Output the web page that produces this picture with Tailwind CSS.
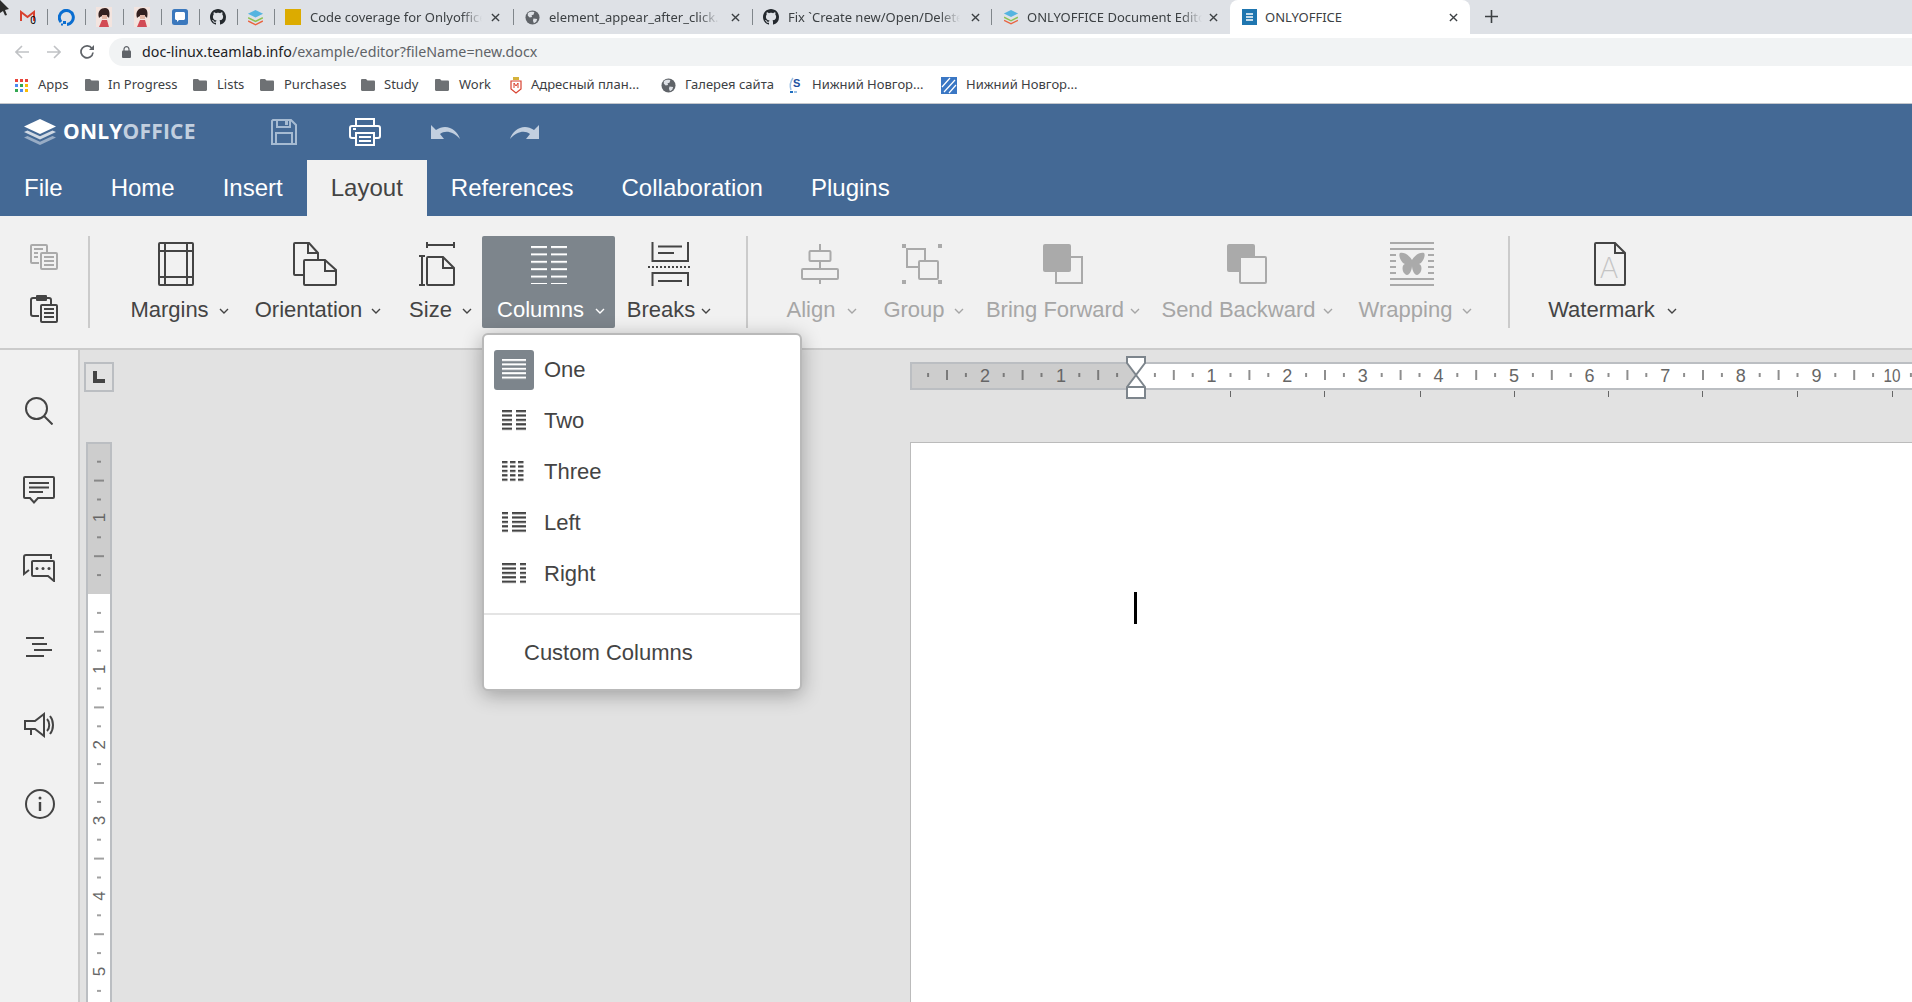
<!DOCTYPE html>
<html>
<head>
<meta charset="utf-8">
<script src="https://cdn.jsdelivr.net/npm/@tailwindcss/browser@4"></script>
<title>ONLYOFFICE</title>
</head>
<body class="w-[1912px] h-[1002px] overflow-hidden relative bg-white font-['Liberation_Sans',Arial,sans-serif] text-[#444444]">
<svg class="absolute w-0 h-0" aria-hidden="true">
  <defs>
    <pattern id="ml" patternUnits="userSpaceOnUse" width="60" height="4.4"><rect width="60" height="2.2" fill="#444444"/></pattern>
    <pattern id="mw" patternUnits="userSpaceOnUse" width="60" height="4.4"><rect width="60" height="2" fill="#ffffff"/></pattern>
    <pattern id="cw" patternUnits="userSpaceOnUse" width="60" height="7.4"><rect width="60" height="2" fill="#ffffff"/></pattern>
    <symbol id="stack" viewBox="0 0 18 18"><path d="M9 1 17 5 9 9 1 5Z" fill="#55b4e0"/><path d="M1.5 8.5 9 12.3 16.5 8.5 17 10 9 14 1 10Z" fill="#8cc152"/><path d="M1.5 12 9 15.8 16.5 12 17 13.5 9 17.5 1 13.5Z" fill="#e9633f"/></symbol>
    <symbol id="gh" viewBox="0 0 16 16"><path fill="#24292e" d="M8 0C3.58 0 0 3.58 0 8c0 3.54 2.29 6.53 5.47 7.59.4.07.55-.17.55-.38 0-.19-.01-.82-.01-1.49-2.01.37-2.53-.49-2.69-.94-.09-.23-.48-.94-.82-1.13-.28-.15-.68-.52-.01-.53.63-.01 1.08.58 1.23.82.72 1.21 1.87.87 2.33.66.07-.52.28-.87.51-1.07-1.78-.2-3.64-.89-3.64-3.95 0-.87.31-1.59.82-2.15-.08-.2-.36-1.02.08-2.12 0 0 .67-.21 2.2.82.64-.18 1.32-.27 2-.27.68 0 1.36.09 2 .27 1.53-1.04 2.2-.82 2.2-.82.44 1.1.16 1.92.08 2.12.51.56.82 1.27.82 2.15 0 3.07-1.87 3.75-3.65 3.95.29.25.54.73.54 1.48 0 1.07-.01 1.93-.01 2.2 0 .21.15.46.55.38A8.013 8.013 0 0016 8c0-4.42-3.58-8-8-8z"/></symbol>
    <symbol id="globe" viewBox="0 0 16 16"><circle cx="8" cy="8" r="7.5" fill="#5f6368"/><path d="M3 3.5C5 2 8 1.5 10 2.5L9 5 7 5.5 7.5 7.5 5 8 3 6ZM9 9 13 9.5 12 12.5 9.5 14 8.5 11.5Z" fill="#dee1e6"/></symbol>
    <symbol id="folder" viewBox="0 0 14 12"><path d="M0 1.2C0 .5.5 0 1.2 0H5L6.5 1.6H12.8C13.5 1.6 14 2.1 14 2.8V10.8C14 11.5 13.5 12 12.8 12H1.2C.5 12 0 11.5 0 10.8Z" fill="#6e7174"/></symbol>
    <symbol id="x" viewBox="0 0 10 10"><path d="M1 1 9 9M9 1 1 9" stroke="#3c4043" stroke-width="1.5" fill="none"/></symbol>
    <symbol id="chev" viewBox="0 0 10 6"><path d="M1 1 5 5 9 1" fill="none" stroke="currentColor" stroke-width="1.4"/></symbol>
    <symbol id="portrait" viewBox="0 0 16 20"><rect width="16" height="20" fill="#f3e4df"/><path d="M3 11C1 4 5 1 9 1 14 1 14 7 13 11 11 8 6 8 3 11Z" fill="#33201f"/><path d="M6 8H11V12H6Z" fill="#e4b7a6"/><path d="M3 20 6 13H11L13 20Z" fill="#d24a54"/></symbol>
  </defs>
</svg>

<!-- mouse pointer -->
<svg class="absolute left-0 top-0 z-30" width="10" height="16" viewBox="0 0 10 16"><path d="M0 0 9 9 5 10 7 15 5 15.5 3 11 0 13Z" fill="#2b2b2b"/></svg>

<!-- browser tab strip -->
<div class="flex h-[34px] bg-[#dee1e6] font-['Noto_Sans',sans-serif] text-[13px] leading-[18px] text-[#3c4043]">
  <div class="w-[47px] h-full flex items-center justify-end pr-[12px]">
    <div class="relative w-[15px] h-[14px]">
      <svg width="15" height="12" viewBox="0 0 15 12"><path d="M1 11V2L7.5 7 14 2V11" fill="none" stroke="#d8412f" stroke-width="2"/></svg>
      <span class="absolute right-[-1px] top-[5px] text-[10px] leading-[10px] text-black">0</span>
    </div>
  </div>
  <div class="w-[38px] flex items-center justify-center relative before:absolute before:left-0 before:top-[9px] before:h-[16px] before:w-px before:bg-[#80868b]">
    <svg width="17" height="17" viewBox="0 0 17 17"><path d="M3 13A7 7 0 1 1 9 15.4" fill="none" stroke="#0a6ed1" stroke-width="3"/><rect x="5" y="12" width="3" height="3" fill="#0a6ed1"/><rect x="3" y="14.5" width="2" height="2" fill="#0a6ed1"/></svg>
  </div>
  <div class="w-[38px] flex items-center justify-center relative before:absolute before:left-0 before:top-[9px] before:h-[16px] before:w-px before:bg-[#80868b]"><svg width="16" height="20"><use href="#portrait"/></svg></div>
  <div class="w-[38px] flex items-center justify-center relative before:absolute before:left-0 before:top-[9px] before:h-[16px] before:w-px before:bg-[#80868b]"><svg width="16" height="20"><use href="#portrait"/></svg></div>
  <div class="w-[38px] flex items-center justify-center relative before:absolute before:left-0 before:top-[9px] before:h-[16px] before:w-px before:bg-[#80868b]">
    <svg width="16" height="16" viewBox="0 0 16 16"><rect width="16" height="16" rx="2.5" fill="#3b78bd"/><path d="M3 4.5C3 3.7 3.7 3 4.5 3H11.5C12.3 3 13 3.7 13 4.5V9.5C13 10.3 12.3 11 11.5 11H7L5 13V11H4.5C3.7 11 3 10.3 3 9.5Z" fill="#ffffff"/></svg>
  </div>
  <div class="w-[38px] flex items-center justify-center relative before:absolute before:left-0 before:top-[9px] before:h-[16px] before:w-px before:bg-[#80868b]"><svg width="16" height="16"><use href="#gh"/></svg></div>
  <div class="w-[37px] flex items-center justify-center relative before:absolute before:left-0 before:top-[9px] before:h-[16px] before:w-px before:bg-[#80868b]"><svg width="17" height="17"><use href="#stack"/></svg></div>

  <div class="w-[239px] flex items-center pl-[11px] relative before:absolute before:left-0 before:top-[9px] before:h-[16px] before:w-px before:bg-[#80868b]">
    <span class="w-[16px] h-[16px] bg-[#dcab00] shrink-0"></span>
    <span class="ml-[9px] w-[172px] overflow-hidden whitespace-nowrap [mask-image:linear-gradient(90deg,#000_88%,transparent)]">Code coverage for Onlyoffice</span>
    <svg class="ml-[9px]" width="9" height="9"><use href="#x"/></svg>
  </div>
  <div class="w-[239px] flex items-center pl-[12px] relative before:absolute before:left-0 before:top-[9px] before:h-[16px] before:w-px before:bg-[#80868b]">
    <svg width="15" height="15" class="shrink-0"><use href="#globe"/></svg>
    <span class="ml-[9px] w-[170px] overflow-hidden whitespace-nowrap [mask-image:linear-gradient(90deg,#000_88%,transparent)]">element_appear_after_click.htm</span>
    <svg class="ml-[12px]" width="9" height="9"><use href="#x"/></svg>
  </div>
  <div class="w-[239px] flex items-center pl-[11px] relative before:absolute before:left-0 before:top-[9px] before:h-[16px] before:w-px before:bg-[#80868b]">
    <svg width="16" height="16" class="shrink-0"><use href="#gh"/></svg>
    <span class="ml-[9px] w-[172px] overflow-hidden whitespace-nowrap [mask-image:linear-gradient(90deg,#000_88%,transparent)]">Fix `Create new/Open/Delete</span>
    <svg class="ml-[11px]" width="9" height="9"><use href="#x"/></svg>
  </div>
  <div class="w-[239px] flex items-center pl-[12px] relative before:absolute before:left-0 before:top-[9px] before:h-[16px] before:w-px before:bg-[#80868b]">
    <svg width="16" height="16" class="shrink-0"><use href="#stack"/></svg>
    <span class="ml-[8px] w-[175px] overflow-hidden whitespace-nowrap [mask-image:linear-gradient(90deg,#000_88%,transparent)]">ONLYOFFICE Document Editor</span>
    <svg class="ml-[7px]" width="9" height="9"><use href="#x"/></svg>
  </div>
  <div class="w-[240px] h-full flex items-center pl-[12px] bg-white rounded-t-[8px]">
    <svg width="15" height="16" viewBox="0 0 15 16" class="shrink-0"><rect width="15" height="16" fill="#1f76b0"/><path d="M4 5H11M4 8H11M4 11H11" stroke="#ffffff" stroke-width="1.3"/></svg>
    <span class="ml-[8px] w-[180px] whitespace-nowrap">ONLYOFFICE</span>
    <svg class="ml-[4px]" width="9" height="9"><use href="#x"/></svg>
  </div>
  <svg class="ml-[15px] mt-[10px]" width="13" height="13" viewBox="0 0 13 13"><path d="M6.5 0V13M0 6.5H13" stroke="#3c4043" stroke-width="1.6"/></svg>
</div>

<!-- address bar -->
<div class="flex items-center h-[33px] pt-[4px] pb-[1px] bg-white font-['Noto_Sans',sans-serif]">
  <svg class="ml-[15px]" width="14" height="14" viewBox="0 0 14 14"><path d="M7 1 1 7 7 13M1 7H14" fill="none" stroke="#c0c2c5" stroke-width="1.6"/></svg>
  <svg class="ml-[18px]" width="14" height="14" viewBox="0 0 14 14"><path d="M7 1 13 7 7 13M13 7H0" fill="none" stroke="#c0c2c5" stroke-width="1.6"/></svg>
  <svg class="ml-[19px]" width="14" height="14" viewBox="0 0 14 14"><path d="M12 3.5A6 6 0 1 0 13 7.5" fill="none" stroke="#5f6368" stroke-width="1.7"/><path d="M9 5H14V0Z" fill="#5f6368"/></svg>
  <div class="ml-[15px] flex-1 h-[28px] rounded-l-full bg-[#f1f3f4] flex items-center pl-[13px] text-[14.25px] whitespace-nowrap">
    <svg width="9" height="12" viewBox="0 0 9 12"><path d="M2 5V3.2A2.5 2.5 0 0 1 7 3.2V5" fill="none" stroke="#5f6368" stroke-width="1.2"/><rect y="4.5" width="9" height="7.5" rx="1" fill="#5f6368"/></svg>
    <span class="ml-[11px] text-[#202124]">doc-linux.teamlab.info<span class="text-[#5f6368]">/example/editor?fileName=new.docx</span></span>
  </div>
</div>

<!-- bookmarks -->
<div class="flex items-center h-[37px] border-b border-[#c4c7cc] bg-white font-['Noto_Sans',sans-serif] text-[13px] text-[#3c4043] whitespace-nowrap">
  <svg class="ml-[15px]" width="13" height="13" viewBox="0 0 13 13">
    <rect width="3" height="3" fill="#e8453c"/><rect x="5" width="3" height="3" fill="#e8453c"/><rect x="10" width="3" height="3" fill="#e8453c"/>
    <rect y="5" width="3" height="3" fill="#4a8af4"/><rect x="5" y="5" width="3" height="3" fill="#34a853"/><rect x="10" y="5" width="3" height="3" fill="#fbbc05"/>
    <rect y="10" width="3" height="3" fill="#34a853"/><rect x="5" y="10" width="3" height="3" fill="#4a8af4"/><rect x="10" y="10" width="3" height="3" fill="#fbbc05"/>
  </svg>
  <span class="ml-[10px] w-[47px]">Apps</span>
  <svg width="14" height="12"><use href="#folder"/></svg>
  <span class="ml-[9px] w-[85px]">In Progress</span>
  <svg width="14" height="12"><use href="#folder"/></svg>
  <span class="ml-[10px] w-[43px]">Lists</span>
  <svg width="14" height="12"><use href="#folder"/></svg>
  <span class="ml-[10px] w-[77px]">Purchases</span>
  <svg width="14" height="12"><use href="#folder"/></svg>
  <span class="ml-[9px] w-[51px]">Study</span>
  <svg width="14" height="12"><use href="#folder"/></svg>
  <span class="ml-[10px] w-[50px]">Work</span>
  <svg width="14" height="17" viewBox="0 0 14 17"><rect x="4" y="0" width="6" height="3" fill="#d5b23b"/><path d="M2 4H12V12L7 16 2 12Z" fill="#fff" stroke="#d8412f" stroke-width="1.2"/><path d="M5 11V6L7 9 9 6V11" stroke="#d8412f" fill="none"/></svg>
  <span class="ml-[8px] w-[130px]">Адресный план...</span>
  <svg width="15" height="15"><use href="#globe"/></svg>
  <span class="ml-[9px] w-[103px]">Галерея сайта</span>
  <svg width="15" height="17" viewBox="0 0 15 17"><path d="M5 1C2 5 2 10 3 13" stroke="#9ec2e6" stroke-width="1.5" fill="none"/><text x="5" y="10" font-size="11" font-weight="700" fill="#1b4fa0" font-family="Liberation Sans">S</text><rect x="2" y="14" width="3" height="2" fill="#1f6fc0"/><rect x="6" y="14" width="3" height="2" fill="#9ec2e6"/></svg>
  <span class="ml-[9px] w-[129px]">Нижний Новгор...</span>
  <svg width="16" height="17" viewBox="0 0 16 17"><rect width="16" height="17" fill="#3a77c4"/><path d="M1 10 9 1M3 15 14 3M8 16 15 8" stroke="#ffffff" stroke-width="1.2"/></svg>
  <span class="ml-[9px]">Нижний Новгор...</span>
</div>

<!-- title row -->
<div class="h-[56px] bg-[#446995] flex items-center">
  <svg class="ml-[24px]" width="32" height="26" viewBox="0 0 32 26">
    <path d="M16 0 32 7.5 16 15 0 7.5Z" fill="#ffffff"/>
    <path d="M0 13 3.5 11.4 16 17.2 28.5 11.4 32 13 16 20.5Z" fill="#ffffff" fill-opacity=".75"/>
    <path d="M0 18.5 3.5 16.9 16 22.7 28.5 16.9 32 18.5 16 26Z" fill="#ffffff" fill-opacity=".45"/>
  </svg>
  <span class="ml-[7px] w-[133px] text-[21px] font-bold font-['Open_Sans',sans-serif] tracking-[0.2px] whitespace-nowrap text-white">ONLY<span class="text-[#c2cfdf]">OFFICE</span></span>
  <svg class="ml-[75px]" width="26" height="26" viewBox="0 0 26 26" fill="none" stroke="#a6bbd2" stroke-width="2"><path d="M2 1H20L25 6V25H1V2Z"/><path d="M6 1V8H19V1"/><path d="M5 25V14H21V25"/><rect x="14" y="2" width="3" height="4" fill="#a6bbd2" stroke="none"/></svg>
  <svg class="ml-[52px]" width="32" height="28" viewBox="0 0 32 28" fill="none" stroke="#ffffff" stroke-width="2"><path d="M7 8V1H25V8"/><path d="M7 20H3C2 20 1 19 1 18V10C1 9 2 8 3 8H29C30 8 31 9 31 10V18C31 19 30 20 29 20H25"/><rect x="7" y="15" width="18" height="12"/><path d="M10 19H22M10 23H22"/><path d="M4 11H7"/></svg>
  <svg class="ml-[50px]" width="29" height="16" viewBox="0 0 29 16"><path d="M0 1V15H13L9 10C14 6 22 7 29 15 26 5 15-1 5 6Z" fill="#c2cfdf"/></svg>
  <svg class="ml-[50px]" width="29" height="16" viewBox="0 0 29 16"><path d="M29 1V15H16L20 10C15 6 7 7 0 15 3 5 14-1 24 6Z" fill="#c2cfdf"/></svg>
</div>

<!-- tabs row -->
<div class="h-[56px] bg-[#446995] flex items-stretch text-[24px] text-white">
  <div class="px-6 flex items-center">File</div>
  <div class="px-6 flex items-center">Home</div>
  <div class="px-6 flex items-center">Insert</div>
  <div class="px-6 flex items-center bg-[#f1f1f1] text-[#444444]">Layout</div>
  <div class="px-6 flex items-center">References</div>
  <div class="px-6 flex items-center">Collaboration</div>
  <div class="px-6 flex items-center">Plugins</div>
</div>

<!-- toolbar -->
<div class="h-[134px] bg-[#f1f1f1] border-b-2 border-[#cbcbcb] pt-[20px] flex items-start text-[22px] text-[#444444]">
  <div class="w-[88px] h-[92px] flex flex-col items-center pl-[0px]">
    <svg class="mt-[8px]" width="28" height="26" viewBox="0 0 28 26" fill="none" stroke="#aaaaaa" stroke-width="2"><path d="M9 19H2C1.400 19 1 18.600 1 18V2C1 1.400 1.400 1 2 1H16C16.600 1 17 1.400 17 2V8"/><rect x="11" y="9" width="16" height="16" rx="1"/><path d="M14 13H24M14 17H24M14 21H24"/><path d="M4 5H13M4 9H8M4 13H8"/></svg>
    <svg class="mt-[25px]" width="28" height="28" viewBox="0 0 28 28" fill="none" stroke="#444444" stroke-width="2"><path d="M9 21H3C2 21 1 20 1 19V5C1 4 2 3 3 3H6M17 3H19C20 3 21 4 21 5V9"/><rect x="6" y="0" width="11" height="6" rx="1" fill="#444444" stroke="none"/><rect x="11" y="10" width="16" height="17" rx="1"/><path d="M14 14H24M14 18H24M14 22H24"/></svg>
  </div>
  <div class="w-[2px] h-[92px] bg-[#cbcbcb] shrink-0"></div>

  <div class="ml-[26px] w-[120px] h-[92px] flex flex-col items-center">
    <svg class="mt-[6px]" width="36" height="44" viewBox="0 0 36 44" fill="none" stroke="#444444" stroke-width="2"><rect x="1" y="1" width="34" height="42" rx="1"/><path d="M7 1V43M29 1V43M1 9H35M1 35H35"/></svg>
    <span class="mt-[11px] pl-[7px] flex items-center leading-[26px]">Margins<svg class="ml-[10px] mt-[1px]" width="10" height="6"><use href="#chev"/></svg></span>
  </div>
  <div class="w-[158px] h-[92px] flex flex-col items-center">
    <svg class="mt-[6px]" width="44" height="44" viewBox="0 0 44 44" fill="none" stroke="#444444" stroke-width="2"><path d="M10 33H2C1.400 33 1 32.600 1 32V2C1 1.400 1.400 1 2 1H16L25 11V17"/><path d="M15 1V11H25"/><path d="M12 18H32L43 28V42C43 42.600 42.600 43 42 43H12C11.400 43 11 42.600 11 42V19C11 18.400 11.400 18 12 18Z"/><path d="M32 18V29H43"/></svg>
    <span class="mt-[11px] pl-[6px] flex items-center leading-[26px]">Orientation<svg class="ml-[9px] mt-[1px]" width="10" height="6"><use href="#chev"/></svg></span>
  </div>
  <div class="w-[88px] h-[92px] flex flex-col items-center">
    <svg class="mt-[6px] mr-[2px]" width="36" height="44" viewBox="0 0 36 44" fill="none" stroke="#444444" stroke-width="2"><path d="M8 3H35M8 0V6M35 0V6"/><path d="M3 14V43M0 14H6M0 43H6"/><path d="M9 15H24L35 26V42C35 42.600 34.600 43 34 43H9C8.400 43 8 42.600 8 42V16C8 15.400 8.400 15 9 15Z"/><path d="M24 15V26H35"/></svg>
    <span class="mt-[11px] pl-[5px] flex items-center leading-[26px]">Size<svg class="ml-[10px] mt-[1px]" width="10" height="6"><use href="#chev"/></svg></span>
  </div>
  <div class="w-[133px] h-[92px] flex flex-col items-center rounded-[2px] bg-[#7d858c] text-white">
    <svg class="mt-[10px]" width="36" height="38" viewBox="0 0 36 38"><rect x="0" width="16" height="38" fill="url(#cw)"/><rect x="20" width="16" height="38" fill="url(#cw)"/></svg>
    <span class="mt-[13px] pl-[5px] flex items-center leading-[26px]">Columns<svg class="ml-[11px] mt-[1px]" width="10" height="6"><use href="#chev"/></svg></span>
  </div>
  <div class="w-[108px] h-[92px] flex flex-col items-center">
    <svg class="mt-[6px]" width="42" height="44" viewBox="0 0 42 44" fill="none" stroke="#444444" stroke-width="2"><path d="M4.500 0V19H40V0M10 4.500H34M10 11H26"/><path d="M0 25H42" stroke-dasharray="2 2"/><path d="M4.500 44V31H40V44M10 39H34"/></svg>
    <span class="mt-[11px] flex items-center leading-[26px]">Breaks<svg class="ml-[6px] mt-[1px]" width="10" height="6"><use href="#chev"/></svg></span>
  </div>
  <div class="ml-[23px] w-[2px] h-[92px] bg-[#cbcbcb] shrink-0"></div>

  <div class="ml-[23px] w-[102px] h-[92px] flex flex-col items-center text-[#a6a6a6]">
    <svg class="mt-[8px] mr-[5px]" width="38" height="40" viewBox="0 0 38 40" fill="none" stroke="#aaaaaa" stroke-width="2"><path d="M19 0V7M19 17V25M19 35V40"/><rect x="8.500" y="7" width="21" height="10" rx="1"/><rect x="1" y="25" width="36" height="10" rx="1"/></svg>
    <span class="mt-[13px] flex items-center leading-[26px]">Align<svg class="ml-[12px] mt-[1px]" width="10" height="6"><use href="#chev"/></svg></span>
  </div>
  <div class="w-[98px] h-[92px] flex flex-col items-center text-[#a6a6a6]">
    <svg class="mt-[8px]" width="40" height="40" viewBox="0 0 40 40" fill="none" stroke="#aaaaaa" stroke-width="2"><path d="M0 2H4M36 2H40M0 38H4M36 38H40" stroke-width="4"/><path d="M17 23H5V5H23V17"/><rect x="17" y="17" width="19" height="18" rx="1"/></svg>
    <span class="mt-[13px] pl-[3px] flex items-center leading-[26px]">Group<svg class="ml-[9px] mt-[1px]" width="10" height="6"><use href="#chev"/></svg></span>
  </div>
  <div class="w-[184px] h-[92px] flex flex-col items-center text-[#a6a6a6]">
    <svg class="mt-[8px]" width="40" height="40" viewBox="0 0 40 40" fill="none" stroke="#aaaaaa" stroke-width="2"><rect width="28" height="28" rx="2" fill="#aaaaaa" stroke="none"/><path d="M28 13H39V39H13V28"/></svg>
    <span class="mt-[13px] flex items-center leading-[26px]">Bring Forward<svg class="ml-[6px] mt-[1px]" width="10" height="6"><use href="#chev"/></svg></span>
  </div>
  <div class="w-[184px] h-[92px] flex flex-col items-center text-[#a6a6a6]">
    <svg class="mt-[8px]" width="40" height="40" viewBox="0 0 40 40" fill="none" stroke="#aaaaaa" stroke-width="2"><rect width="28" height="28" rx="2" fill="#aaaaaa" stroke="none"/><rect x="13" y="13" width="26" height="26" rx="1" fill="#f1f1f1"/></svg>
    <span class="mt-[13px] flex items-center leading-[26px]">Send Backward<svg class="ml-[7px] mt-[1px]" width="10" height="6"><use href="#chev"/></svg></span>
  </div>
  <div class="w-[148px] h-[92px] flex flex-col items-center text-[#a6a6a6]">
    <svg class="mt-[6px] mr-[2px]" width="44" height="44" viewBox="0 0 44 44" fill="none" stroke="#aaaaaa" stroke-width="2"><path d="M0 1H44M0 7H44M0 37H44M0 43H44"/><path d="M0 13H6M38 13H44M0 19H6M38 19H44M0 25H6M38 25H44M0 31H6M38 31H44"/><path d="M22 18C19 13 14 10 10 11 8 13 11 21 15 22 11 23 12 32 17 33 20 33 22 27 22 24 22 27 24 33 27 33 32 32 33 23 29 22 33 21 36 13 34 11 30 10 25 13 22 18Z" fill="#aaaaaa" stroke="none"/></svg>
    <span class="mt-[11px] pl-[5px] flex items-center leading-[26px]">Wrapping<svg class="ml-[10px] mt-[1px]" width="10" height="6"><use href="#chev"/></svg></span>
  </div>
  <div class="ml-[21px] w-[2px] h-[92px] bg-[#cbcbcb] shrink-0"></div>
  <div class="ml-[29px] w-[144px] h-[92px] flex flex-col items-center">
    <svg class="mt-[6px] mr-[2px]" width="32" height="44" viewBox="0 0 32 44" fill="none" stroke="#444444" stroke-width="2"><path d="M2 1H21L31 11V42C31 42.600 30.600 43 30 43H2C1.400 43 1 42.600 1 42V2C1 1.400 1.400 1 2 1Z"/><path d="M21 1V11H31"/><text x="5.500" y="36" font-size="29" font-weight="200" fill="#c4c4c4" stroke="none" font-family="Inter, Liberation Sans, sans-serif">A</text></svg>
    <span class="mt-[11px] pl-[3px] flex items-center leading-[26px]">Watermark<svg class="ml-[12px] mt-[1px]" width="10" height="6"><use href="#chev"/></svg></span>
  </div>
</div>

<!-- main -->
<div class="flex h-[652px]">
  <aside class="w-[80px] h-full bg-[#f1f1f1] border-r-2 border-[#cbcbcb] pt-[22px] shrink-0">
    <div class="h-[78.5px] flex items-center justify-center pr-[1px]">
      <svg width="28" height="28" viewBox="0 0 28 28" fill="none" stroke="#444444" stroke-width="2"><circle cx="11.500" cy="11.500" r="10.500"/><path d="M19 19 27.500 27.500"/></svg>
    </div>
    <div class="h-[78.5px] flex items-center justify-center">
      <svg width="32" height="28" viewBox="0 0 32 28" fill="none" stroke="#444444" stroke-width="2"><path d="M2 1H30C30.600 1 31 1.400 31 2V21C31 21.600 30.600 22 30 22H15L11 26.500 7 22H2C1.400 22 1 21.600 1 21V2C1 1.400 1.400 1 2 1Z"/><path d="M6 7H26M6 11.500H26M6 16H20"/></svg>
    </div>
    <div class="h-[78.5px] flex items-center justify-center">
      <svg width="32" height="28" viewBox="0 0 32 28" fill="none" stroke="#444444" stroke-width="2"><path d="M28 5V1H3C2 1 1 2 1 3V20L6 16"/><path d="M10 7H30C30.600 7 31 7.400 31 8V27L25 22H10C9.400 22 9 21.600 9 21V8C9 7.400 9.400 7 10 7Z"/><circle cx="14" cy="14.500" r="1.500" fill="#444444" stroke="none"/><circle cx="20" cy="14.500" r="1.500" fill="#444444" stroke="none"/><circle cx="26" cy="14.500" r="1.500" fill="#444444" stroke="none"/></svg>
    </div>
    <div class="h-[78.5px] flex items-center justify-center">
      <svg width="26" height="20" viewBox="0 0 26 20" fill="none" stroke="#444444" stroke-width="2"><path d="M0 1H18M6 7H21M8 13H26M0 19H18"/></svg>
    </div>
    <div class="h-[78.5px] flex items-center justify-center">
      <svg width="30" height="26" viewBox="0 0 30 26" fill="none" stroke="#444444" stroke-width="2"><path d="M1 9H11L20 2V24L11 17H1Z"/><path d="M7 17V23"/><path d="M23 7C26 10 26 16 23 19"/><path d="M26 4C30 9 30 17 26 22"/></svg>
    </div>
    <div class="h-[78.5px] flex items-center justify-center pl-[1px]">
      <svg width="30" height="30" viewBox="0 0 30 30" fill="none" stroke="#444444" stroke-width="2"><circle cx="15" cy="15" r="14"/><circle cx="15" cy="9" r="1.500" fill="#444444" stroke="none"/><path d="M15 13V22" stroke-width="2.400"/></svg>
    </div>
  </aside>

  <main class="flex-1 h-full bg-[#e2e2e2] flex overflow-hidden">
    <div class="ml-[4px] pt-[12px] w-[30px] shrink-0 flex flex-col">
      <div class="w-[30px] h-[30px] border-2 border-[#bbbec2] flex items-center justify-center">
        <svg width="12" height="12" viewBox="0 0 12 12"><path d="M0 0H4V8H12V12H0Z" fill="#444444"/></svg>
      </div>
      <svg class="ml-[2px] mt-[50px]" width="26" height="560" viewBox="0 0 26 560">
        <defs>
          <pattern id="vt" patternUnits="userSpaceOnUse" width="26" height="75.6" y="152">
            <path d="M11 18.900H15M8 37.800H18M11 56.700H15" stroke="#444444" stroke-width="1.200"/>
          </pattern>
        </defs>
        <rect width="26" height="560" fill="#ffffff"/>
        <rect width="26" height="152" fill="#cdcdcd"/>
        <rect width="26" height="560" fill="url(#vt)"/>
        <path d="M1 560V1H25V560" fill="none" stroke="#bbbec2" stroke-width="2"/>
        <g font-family="Liberation Sans" font-size="17" fill="#666666" text-anchor="middle">
          <text transform="translate(19 75.400) rotate(-90)">1</text>
          <text transform="translate(19 227.200) rotate(-90)">1</text>
          <text transform="translate(19 302.800) rotate(-90)">2</text>
          <text transform="translate(19 378.400) rotate(-90)">3</text>
          <text transform="translate(19 454) rotate(-90)">4</text>
          <text transform="translate(19 529.600) rotate(-90)">5</text>
        </g>
      </svg>
    </div>

    <div class="ml-auto w-[1002px] pt-[12px] shrink-0 flex flex-col">
      <div class="relative h-[28px]">
        <svg class="block" width="1002" height="28" viewBox="0 0 1002 28">
          <defs>
            <pattern id="ht" patternUnits="userSpaceOnUse" width="75.6" height="28" x="226">
              <path d="M18.900 11V15M37.800 8V18M56.700 11V15" stroke="#444444" stroke-width="1.200"/>
            </pattern>
          </defs>
          <rect width="1002" height="28" fill="#ffffff"/>
          <rect width="226" height="28" fill="#cdcdcd"/>
          <rect width="1002" height="28" fill="url(#ht)"/>
          <path d="M1002 1H1V27H1002" fill="none" stroke="#bbbec2" stroke-width="2"/>
          <g font-family="Liberation Sans" font-size="18" fill="#666666" text-anchor="middle">
            <text x="75" y="20">2</text><text x="151" y="20">1</text>
            <text x="301.600" y="20">1</text><text x="377.200" y="20">2</text><text x="452.800" y="20">3</text><text x="528.400" y="20">4</text><text x="604" y="20">5</text><text x="679.600" y="20">6</text><text x="755.200" y="20">7</text><text x="830.800" y="20">8</text><text x="906.400" y="20">9</text><text x="982" y="20" textLength="17" lengthAdjust="spacingAndGlyphs">10</text>
          </g>
        </svg>
        <!-- indent markers over the ruler -->
        <svg class="absolute left-[216px] top-[-6px]" width="20" height="43" viewBox="0 0 20 43" fill="#ffffff" stroke="#7d858c" stroke-width="2"><path d="M1 1H19V7L10 19 19 31V42H1V31L10 19 1 7Z" fill="#ffffff"/><path d="M1 31H19"/></svg>
        <svg class="absolute left-[320px] top-[29px]" width="664" height="6" viewBox="0 0 664 6"><path d="M0.500 0V6M94.500 0V6M190.500 0V6M284.500 0V6M378.500 0V6M472.500 0V6M567.500 0V6M662.500 0V6" stroke="#666666" stroke-width="1"/></svg>
      </div>
      <div class="mt-[52px] flex-1 bg-white border-l border-t border-[#bbbbbb] pl-[223px] pt-[149px]">
        <div class="w-[3px] h-[32px] bg-black"></div>
      </div>
    </div>
  </main>
</div>

<!-- Columns dropdown -->
<div class="absolute left-[482px] top-[333px] w-[320px] h-[358px] bg-white rounded-[6px] border-2 border-[#b9b9b9] shadow-[0_4px_20px_rgba(0,0,0,0.3)] z-20 pt-[9px] text-[22px] text-[#444444]">
  <div class="h-[51px] flex items-center pl-[10px]">
    <div class="w-[40px] h-[40px] rounded-[3px] bg-[#7d858c] flex items-center justify-center"><svg width="24" height="22"><rect width="24" height="22" fill="url(#mw)"/></svg></div>
    <span class="ml-[10px]">One</span>
  </div>
  <div class="h-[51px] flex items-center pl-[10px]">
    <div class="w-[40px] h-[40px] flex items-center justify-center"><svg width="24" height="22"><rect width="10" height="22" fill="url(#ml)"/><rect x="14" width="10" height="22" fill="url(#ml)"/></svg></div>
    <span class="ml-[10px]">Two</span>
  </div>
  <div class="h-[51px] flex items-center pl-[10px]">
    <div class="w-[40px] h-[40px] flex items-center justify-center"><svg width="24" height="22"><rect width="5.500" height="22" fill="url(#ml)"/><rect x="8" width="5.500" height="22" fill="url(#ml)"/><rect x="16" width="5.500" height="22" fill="url(#ml)"/></svg></div>
    <span class="ml-[10px]">Three</span>
  </div>
  <div class="h-[51px] flex items-center pl-[10px]">
    <div class="w-[40px] h-[40px] flex items-center justify-center"><svg width="24" height="22"><rect width="6" height="22" fill="url(#ml)"/><rect x="10" width="14" height="22" fill="url(#ml)"/></svg></div>
    <span class="ml-[10px]">Left</span>
  </div>
  <div class="h-[51px] flex items-center pl-[10px]">
    <div class="w-[40px] h-[40px] flex items-center justify-center"><svg width="24" height="22"><rect width="14" height="22" fill="url(#ml)"/><rect x="18" width="6" height="22" fill="url(#ml)"/></svg></div>
    <span class="ml-[10px]">Right</span>
  </div>
  <div class="mt-[14px] h-[2px] bg-[#e4e4e4]"></div>
  <div class="h-[75px] flex items-center pl-[40px]">Custom Columns</div>
</div>
</body>
</html>
